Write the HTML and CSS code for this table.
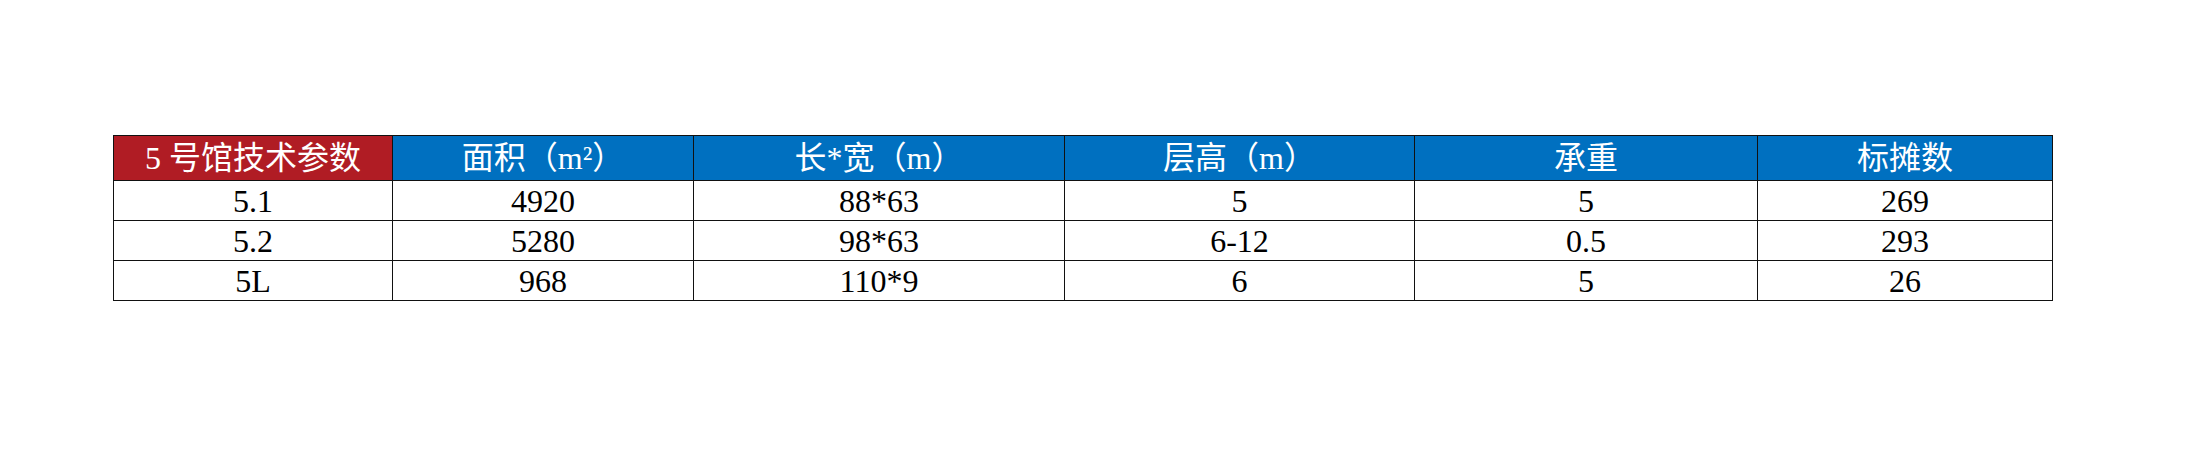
FILE: index.html
```html
<!DOCTYPE html>
<html lang="zh-CN">
<head>
<meta charset="utf-8">
<title>5号馆技术参数</title>
<link rel="stylesheet" href="styles.css">
</head>
<body>
<div class="page">
  <table class="spec">
    <colgroup>
      <col class="c1"><col class="c2"><col class="c3"><col class="c4"><col class="c5"><col class="c6">
    </colgroup>
    <thead>
      <tr class="head">
        <th class="title">5 号馆技术参数</th>
        <th>面积（m²）</th>
        <th>长*宽（m）</th>
        <th>层高（m）</th>
        <th>承重</th>
        <th>标摊数</th>
      </tr>
    </thead>
    <tbody>
      <tr><td>5.1</td><td>4920</td><td>88*63</td><td>5</td><td>5</td><td>269</td></tr>
      <tr><td>5.2</td><td>5280</td><td>98*63</td><td>6-12</td><td>0.5</td><td>293</td></tr>
      <tr><td>5L</td><td>968</td><td>110*9</td><td>6</td><td>5</td><td>26</td></tr>
    </tbody>
  </table>
</div>
</body>
</html>
```

FILE: styles.css
```css
html, body {
  margin: 0;
  padding: 0;
  background: #ffffff;
}

.page {
  padding: 135px 0 0 113px;
}

.spec {
  border-collapse: collapse;
  table-layout: fixed;
  width: 1939px;
  font-family: "Liberation Serif", "Noto Sans CJK SC", serif;
  font-size: 32px;
  color: #000;
}

.c1 { width: 279px; }
.c2 { width: 301px; }
.c3 { width: 371px; }
.c4 { width: 350px; }
.c5 { width: 343px; }
.c6 { width: 295px; }

.spec th,
.spec td {
  border: 1px solid #111111;
  padding: 0;
  text-align: center;
  vertical-align: middle;
  line-height: 1;
  white-space: nowrap;
}

.head {
  height: 45px;
}

.head th {
  background: #0070c0;
  color: #ffffff;
  font-weight: normal;
  font-size: 32px;
}

.head th.title {
  background: #b01c24;
}

.spec tbody tr {
  height: 40px;
}
```
